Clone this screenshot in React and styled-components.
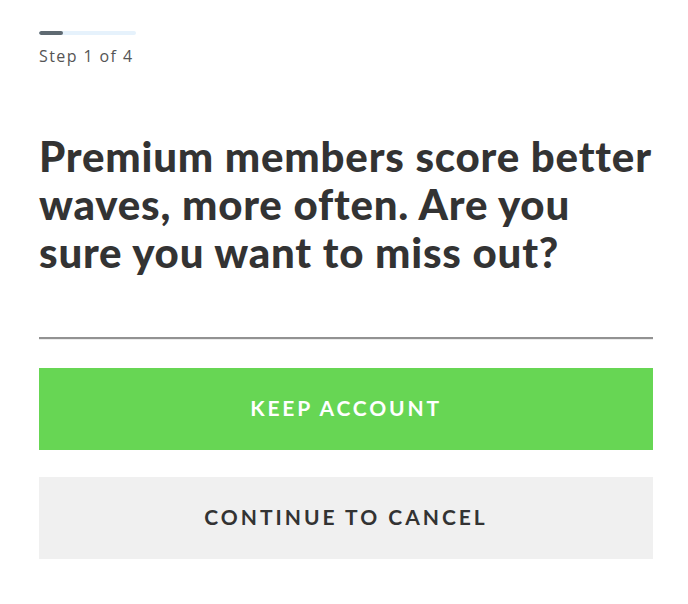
import styled, { createGlobalStyle } from "styled-components";

const GlobalStyle = createGlobalStyle`
    * { box-sizing: border-box; }
    body {
        margin: 0;
        background: #fff;
        font-family: "Lato", "Open Sans", sans-serif;
    }
`;

export default function App(){
    const step = 1;
    const total = 4;

    return (
        <>
            <GlobalStyle />
            <Container>
                <Progress>
                    <ProgressTrack>
                        <ProgressFill style={{ width: `${(step / total) * 100}%` }} />
                    </ProgressTrack>
                    <StepText>Step {step} of {total}</StepText>
                </Progress>
                <Title>Premium members score better waves, more often. Are you sure you want to miss out?</Title>
                <Divider />
                <Buttons>
                    <Button primary>Keep Account</Button>
                    <Button>Continue to Cancel</Button>
                </Buttons>
            </Container>
        </>
    );
}

const Container = styled.main`
    width: 100%;
    display: flex;
    flex-direction: column;
    padding: 31px 35px 0 39px;
`;

const Progress = styled.section`
    display: flex;
    flex-direction: column;
    gap: 11px;
`;

const ProgressTrack = styled.div`
    width: 97px;
    height: 4px;
    border-radius: 2px;
    background: #e6f2fc;
    overflow: hidden;
`;

const ProgressFill = styled.div`
    height: 100%;
    border-radius: 2px;
    background: #5f6a72;
`;

const StepText = styled.p`
    margin: 0;
    font-family: "Open Sans", sans-serif;
    font-size: 16px;
    line-height: 20px;
    letter-spacing: 1.4px;
    color: #555;
`;

const Title = styled.h1`
    margin: 66px 0 0 0;
    font-family: "Lato", sans-serif;
    font-weight: 900;
    font-size: 42px;
    line-height: 48px;
    letter-spacing: 0.8px;
    color: #333;
`;

const Divider = styled.hr`
    width: 100%;
    margin: 61px 0 0 0;
    height: 0;
    border: none;
    border-top: 2px solid #929292;
    border-bottom: 1px solid #ececec;
`;

const Buttons = styled.section`
    display: flex;
    flex-direction: column;
    gap: 27px;
    margin-top: 28px;
`;

const Button = styled.button`
    width: 100%;
    height: 82px;
    border: none;
    padding: 0 0 4px 0;
    font-family: "Lato", sans-serif;
    font-weight: 700;
    font-size: 21px;
    letter-spacing: ${props => props.primary ? "2.8px" : "3px"};
    text-transform: uppercase;
    background: ${props => props.primary ? "#67d654" : "#f0f0f0"};
    color: ${props => props.primary ? "#fff" : "#333"};
    cursor: pointer;
`;
